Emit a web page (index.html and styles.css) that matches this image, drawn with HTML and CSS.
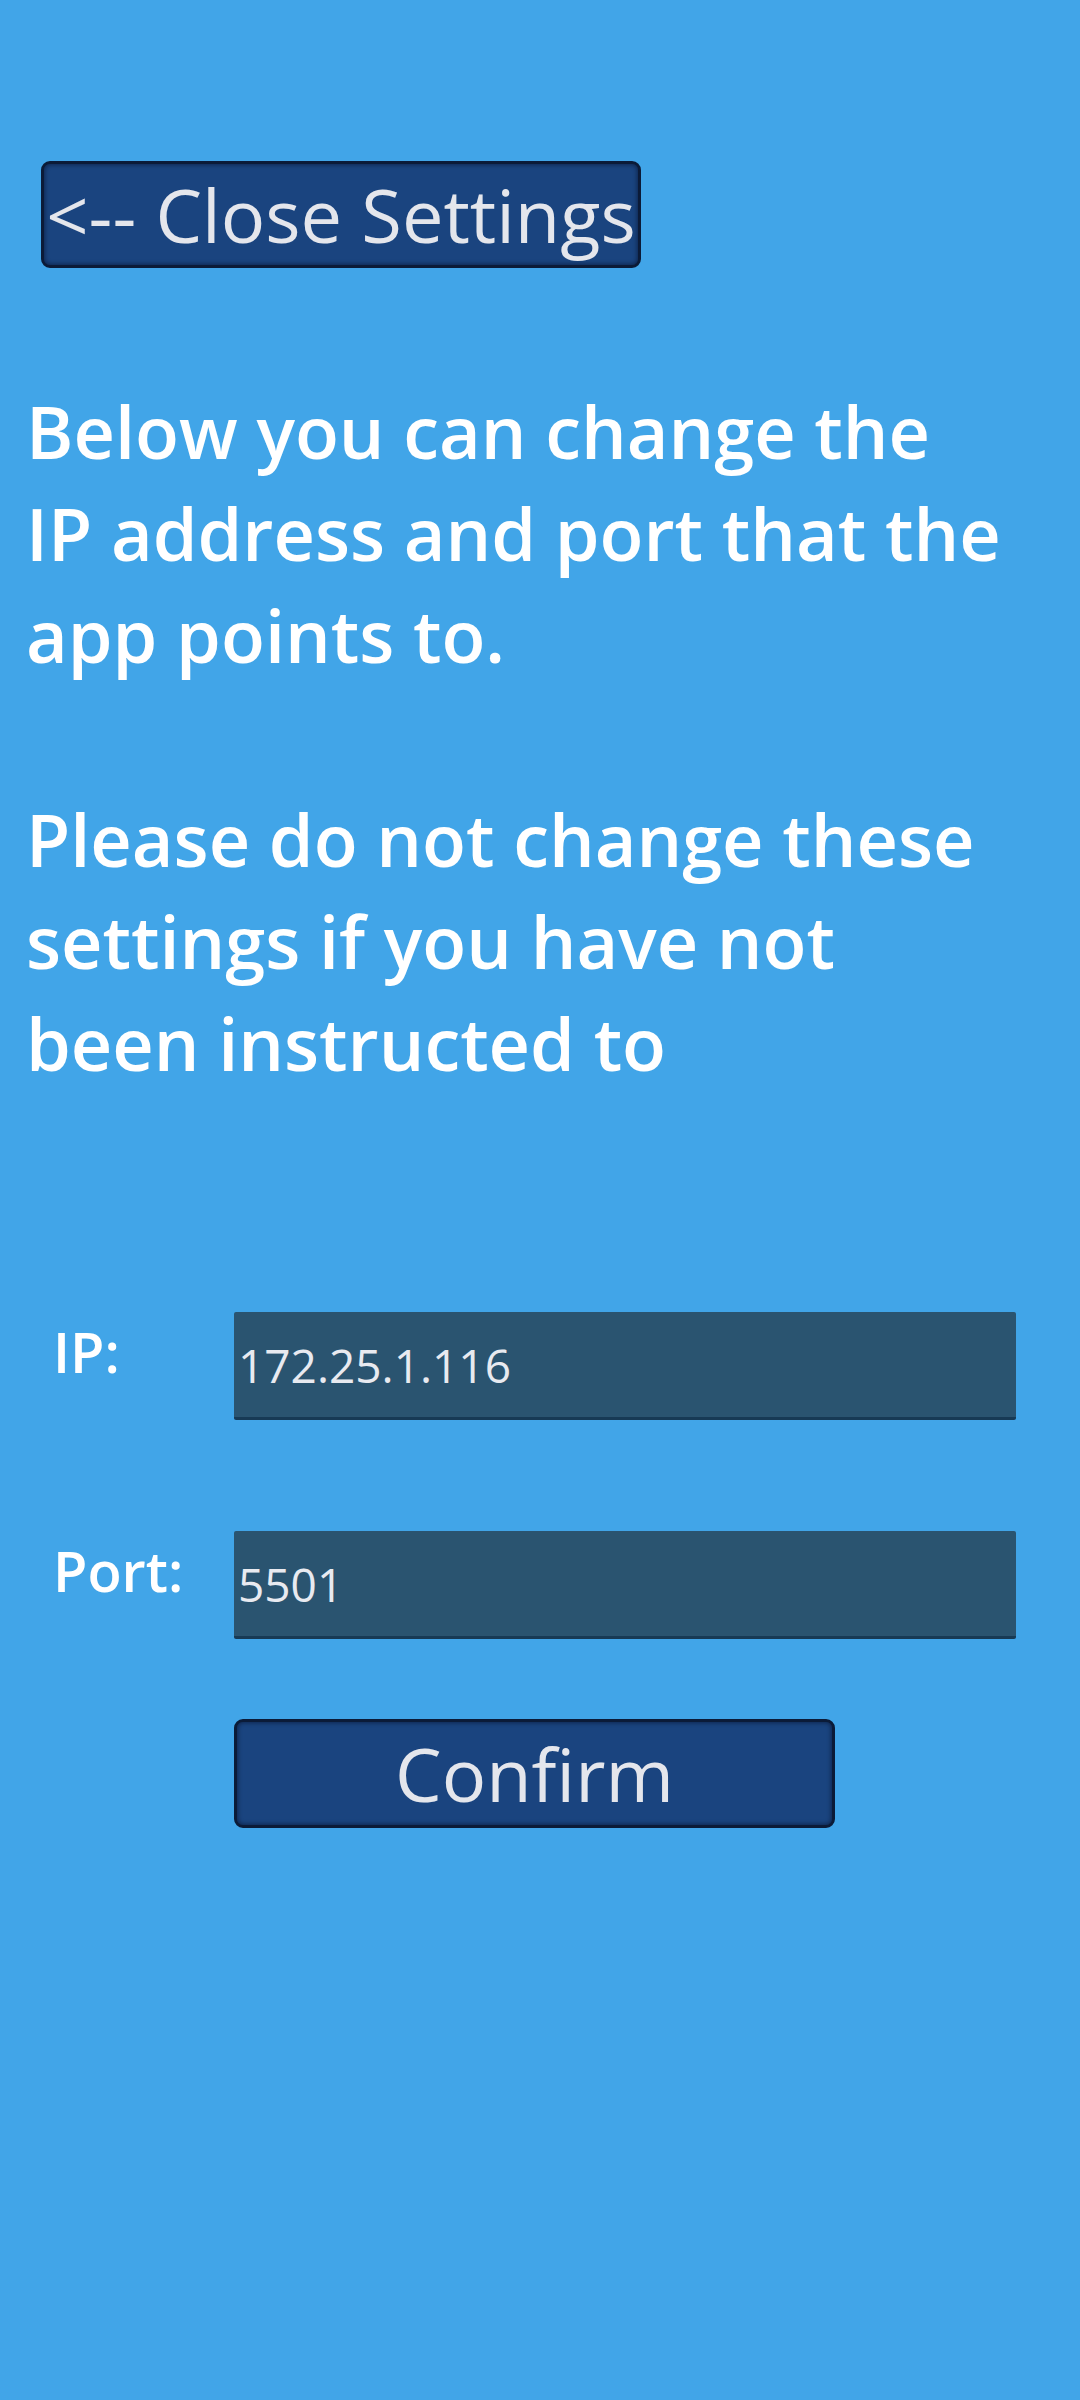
FILE: index.html
```html
<!DOCTYPE html>
<html lang="en">
<head>
<meta charset="utf-8">
<title>Settings</title>
<link rel="stylesheet" href="styles.css">
</head>
<body>
<main class="screen">
  <button class="btn btn-close" type="button">&lt;-- Close Settings</button>
  <p class="intro">Below you can change the<br>IP address and port that the<br>app points to.<br><br>Please do not change these<br>settings if you have not<br>been instructed to</p>
  <form class="form">
    <div class="row">
      <label class="label" for="ip">IP:</label>
      <input class="field" id="ip" type="text" value="172.25.1.116">
    </div>
    <div class="row">
      <label class="label" for="port">Port:</label>
      <input class="field" id="port" type="text" value="5501">
    </div>
    <div class="actions">
      <button class="btn btn-confirm" type="button">Confirm</button>
    </div>
  </form>
</main>
</body>
</html>
```

FILE: styles.css
```css
html, body {
  margin: 0;
  padding: 0;
  background: #41a5e8;
}

body {
  width: 1080px;
  height: 2400px;
  font-family: "Open Sans", "Noto Sans", sans-serif;
  color: #ffffff;
}

.screen {
  display: flex;
  flex-direction: column;
  padding-top: 161px;
}

.btn {
  box-sizing: border-box;
  margin: 0;
  padding: 0;
  background: #1a447f;
  border: 3px solid #0b1b38;
  border-radius: 9px;
  box-shadow: inset 0 0 4px 1px rgba(5, 15, 40, 0.55);
  color: #e4e6ec;
  font-family: "Open Sans", "Noto Sans", sans-serif;
  font-weight: 500;
  font-size: 74px;
  line-height: 1;
  display: flex;
  align-items: center;
  justify-content: center;
  white-space: nowrap;
}

.btn-close {
  margin-left: 41px;
  width: 600px;
  height: 107px;
  align-self: flex-start;
}

.intro {
  margin: 112px 0 0 26px;
  font-size: 72px;
  font-weight: 600;
  line-height: 102px;
  color: #ffffff;
}

.form {
  display: flex;
  flex-direction: column;
  gap: 111px;
  margin-top: 218px;
}

.row {
  display: grid;
  grid-template-columns: 234px 782px;
  align-items: start;
}

.label {
  padding-left: 53px;
  margin-top: 1px;
  font-size: 56px;
  font-weight: 600;
  line-height: 1.362;
  color: #ffffff;
}

.field {
  box-sizing: border-box;
  width: 782px;
  height: 108px;
  margin: 0;
  padding: 0 0 0 4px;
  background: #2a5470;
  border: none;
  border-bottom: 3px solid #173a55;
  border-radius: 2px;
  color: #e8eaf0;
  font-family: "Open Sans", "Noto Sans", sans-serif;
  font-size: 46px;
  font-weight: 500;
  outline: none;
}

.actions {
  margin-top: -31px;
  padding-left: 234px;
}

.btn-confirm {
  width: 601px;
  height: 109px;
}
```
